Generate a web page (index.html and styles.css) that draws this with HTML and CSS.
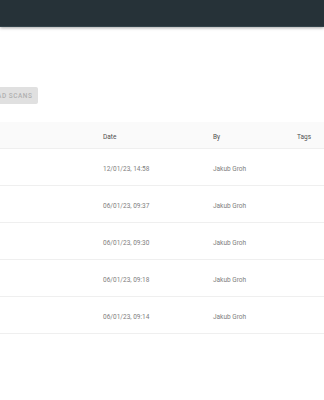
FILE: index.html
```html
<!DOCTYPE html>
<html lang="en">
<head>
  <meta charset="UTF-8">
  <meta name="viewport" content="width=device-width, initial-scale=1.0">
  <title>Scans</title>
  <link rel="stylesheet" href="styles.css">
</head>
<body>
  <header class="topbar"></header>

  <main class="content">
    <button class="upload" disabled>Upload scans</button>

    <div class="table">
      <div class="row head">
        <span>Name</span>
        <span>Date</span>
        <span>By</span>
        <span>Tags</span>
      </div>
      <div class="row">
        <span></span>
        <span>12/01/23, 14:58</span>
        <span>Jakub Groh</span>
        <span></span>
      </div>
      <div class="row">
        <span></span>
        <span>06/01/23, 09:37</span>
        <span>Jakub Groh</span>
        <span></span>
      </div>
      <div class="row">
        <span></span>
        <span>06/01/23, 09:30</span>
        <span>Jakub Groh</span>
        <span></span>
      </div>
      <div class="row">
        <span></span>
        <span>06/01/23, 09:18</span>
        <span>Jakub Groh</span>
        <span></span>
      </div>
      <div class="row">
        <span></span>
        <span>06/01/23, 09:14</span>
        <span>Jakub Groh</span>
        <span></span>
      </div>
    </div>
  </main>
</body>
</html>
```

FILE: styles.css
```css
* {
  margin: 0;
  padding: 0;
  box-sizing: border-box;
}

body {
  font-family: Roboto, "Liberation Sans", sans-serif;
  background: #ffffff;
  overflow: hidden;
  width: 324px;
  height: 400px;
}

/* Top app bar */
.topbar {
  height: 27px;
  background: #263238;
  border-bottom: 1px solid #33434a;
  box-shadow: 0 1px 3px rgba(0, 0, 0, 0.35);
}

/* page is scrolled a bit to the right */
.content {
  margin-left: -26px;
  width: 430px;
  padding-top: 60px;
}

.upload {
  display: block;
  width: 64px;
  height: 17px;
  border: none;
  border-radius: 2px;
  background: #e0e0e0;
  color: #b0b0b0;
  font-family: inherit;
  font-size: 6.5px;
  font-weight: 500;
  letter-spacing: 0.5px;
  text-transform: uppercase;
  padding-left: 5px;
  text-align: left;
}

.table {
  margin-top: 18px;
}

.row {
  display: grid;
  grid-template-columns: 129px 110px 84px 1fr;
  align-items: center;
  height: 37px;
  padding-top: 3px;
  border-bottom: 1px solid #efefef;
  font-size: 6.5px;
  color: #7e7e7e;
}

.row.head {
  height: 27px;
  background: #fafafa;
  color: #505050;
}

.row.head span:first-child {
  visibility: hidden;
}
```
